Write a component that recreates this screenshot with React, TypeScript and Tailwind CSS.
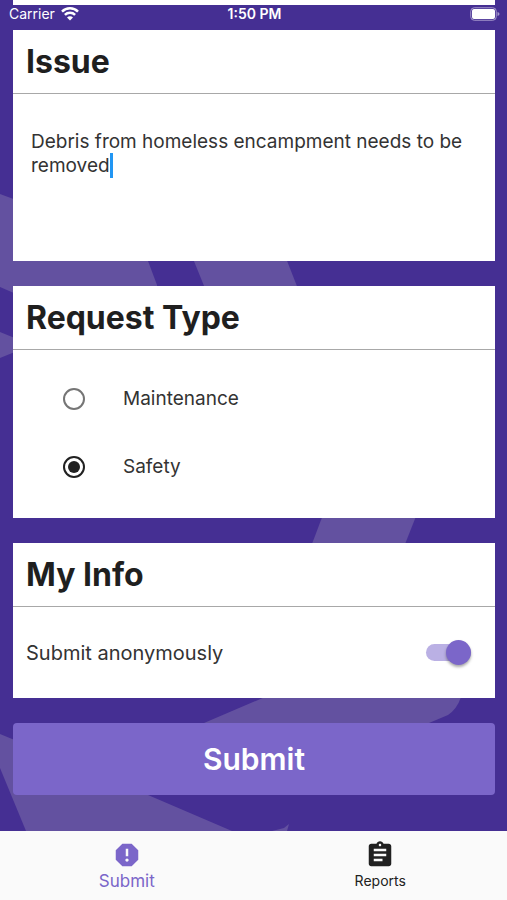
import { useState } from 'react';
import type { ComponentType, ReactNode } from 'react';
import { MdAssignment, MdReport } from 'react-icons/md';

const REQUEST_TYPES = ['Maintenance', 'Safety'];

interface CardProps {
  title: string;
  children: ReactNode;
}

interface NavItemProps {
  label: string;
  icon: ComponentType<{ className?: string }>;
  active?: boolean;
}

function Backdrop() {
  return (
    <svg
      className="absolute inset-0 w-full h-full text-[#6351a0]"
      viewBox="0 0 507 831"
      preserveAspectRatio="xMidYMin slice"
      fill="currentColor"
      aria-hidden="true"
    >
      <path d="M0 194 L135 244 L148 261 L157 285 L168 360 L0 287 Z" />
      <path d="M168 197 L262 197 L322 350 L230 350 Z" />
      <path d="M0 332 L32 345 L0 358 Z" />
      <path d="M332 491 L426 491 L379 610 L287 610 Z" />
      <path d="M204 723 L265 697 L320 670 L470 670 L461 697 Q457 709 448 715 L429 723 L400 735 L190 735 Z" />
      <path d="M0 734 L148 795 L232 831 L26 831 L0 768 Z" />
      <path d="M272 831 L284 828 L289 824 L287 831 Z" />
    </svg>
  );
}

function WifiIcon() {
  return (
    <svg className="w-[18px] h-[14px]" viewBox="0 0 18 14" fill="none" stroke="currentColor" strokeWidth="2.5" aria-hidden="true">
      <path d="M1 4.6 A11.3 11.3 0 0 1 17 4.6" />
      <path d="M3.9 7.8 A7.2 7.2 0 0 1 14.1 7.8" />
      <path d="M9 13.4 L6 10.4 A4.2 4.2 0 0 1 12 10.4 Z" fill="currentColor" stroke="none" />
    </svg>
  );
}

function BatteryIcon() {
  return (
    <svg className="w-[30px] h-[14px]" viewBox="0 0 30 14" fill="none" aria-hidden="true">
      <rect x="0.75" y="0.75" width="25.5" height="12.5" rx="3.5" stroke="#a497cc" />
      <rect x="2" y="2" width="23" height="10" rx="2" fill="white" />
      <path d="M27.5 5 Q29.5 5.6 29.5 7 Q29.5 8.4 27.5 9 Z" fill="#a497cc" />
    </svg>
  );
}

function StatusBar() {
  return (
    <header className="relative h-[30px] text-white">
      <div className="h-[5px] ml-[13px] mr-3 bg-white" />
      <div className="grid grid-cols-3 items-center h-[17px] pl-[9px] pr-[7px] text-sm leading-4">
        <div className="flex items-center gap-1.5">
          <span>Carrier</span>
          <WifiIcon />
        </div>
        <span className="text-center font-semibold">1:50 PM</span>
        <div className="flex justify-end">
          <BatteryIcon />
        </div>
      </div>
    </header>
  );
}

function Card({ title, children }: CardProps) {
  return (
    <section className="bg-white">
      <h2 className="h-16 px-[13px] border-b border-[#a8a8a8] text-[32px] leading-[64px] font-bold text-[#1f1f1f]">
        {title}
      </h2>
      {children}
    </section>
  );
}

function NavItem({ label, icon: Icon, active = false }: NavItemProps) {
  return (
    <a
      href={`#${label.toLowerCase()}`}
      aria-current={active ? 'page' : undefined}
      className={`flex flex-1 flex-col items-center pt-[9px] ${
        active ? 'text-[#7b66c9] text-[17px]' : 'text-[#212121] text-sm'
      }`}
    >
      <Icon className="w-[30px] h-[30px]" />
      <span className="leading-[22px]">{label}</span>
    </a>
  );
}

export default function App() {
  const [issue, setIssue] = useState('Debris from homeless encampment needs to be removed');
  const [edited, setEdited] = useState(false);
  const [requestType, setRequestType] = useState('Safety');
  const [anonymous, setAnonymous] = useState(true);

  return (
    <div className="flex flex-col min-h-screen bg-[#452f93] font-['Inter',sans-serif] text-[#333333]">
      <div className="relative flex-1">
        <Backdrop />
        <StatusBar />
        <form
          className="relative flex flex-col gap-[25px] pl-[13px] pr-3 pb-9"
          onSubmit={(e) => e.preventDefault()}
        >
          <Card title="Issue">
            <div className="relative px-[18px] pt-9">
              <textarea
                aria-label="Issue"
                rows={5}
                className="block w-full h-[131px] resize-none outline-none caret-[#2196f3] text-[19px] leading-6"
                value={issue}
                onChange={(e) => {
                  setIssue(e.target.value);
                  setEdited(true);
                }}
              />
              {!edited && <span className="absolute left-[97px] top-[59px] w-[3px] h-[25px] bg-[#2196f3]" />}
            </div>
          </Card>

          <Card title="Request Type">
            <div role="radiogroup" aria-label="Request Type" className="pt-[15px] pb-[17px]">
              {REQUEST_TYPES.map((type) => (
                <label key={type} className="flex items-center gap-[38px] h-[68px] px-[50px] text-[19px]">
                  <input
                    type="radio"
                    name="requestType"
                    value={type}
                    checked={requestType === type}
                    onChange={() => setRequestType(type)}
                    className="appearance-none w-[22px] h-[22px] p-[3px] rounded-full border-2 border-[#757575] bg-clip-content checked:border-[#212121] checked:bg-[#212121]"
                  />
                  {type}
                </label>
              ))}
            </div>
          </Card>

          <Card title="My Info">
            <label className="flex items-center justify-between h-[91px] pl-[13px] pr-6 text-xl">
              Submit anonymously
              <input
                type="checkbox"
                role="switch"
                checked={anonymous}
                onChange={(e) => setAnonymous(e.target.checked)}
                className="appearance-none flex items-center w-[45px] h-[17px] rounded-full bg-[#bdbdbd] checked:bg-[#bab0e4] checked:justify-end before:w-[25px] before:h-[25px] before:shrink-0 before:rounded-full before:bg-[#f5f5f5] before:shadow-[0_2px_3px_rgba(0,0,0,0.35)] checked:before:bg-[#7b66c9]"
              />
            </label>
          </Card>

          <button
            type="submit"
            className="h-[72px] rounded-[4px] bg-[#7b66c9] text-white text-[30px] leading-8 font-semibold"
          >
            Submit
          </button>
        </form>
      </div>

      <nav className="flex h-[69px] bg-[#fafafa]">
        <NavItem label="Submit" icon={MdReport} active />
        <NavItem label="Reports" icon={MdAssignment} />
      </nav>
    </div>
  );
}
